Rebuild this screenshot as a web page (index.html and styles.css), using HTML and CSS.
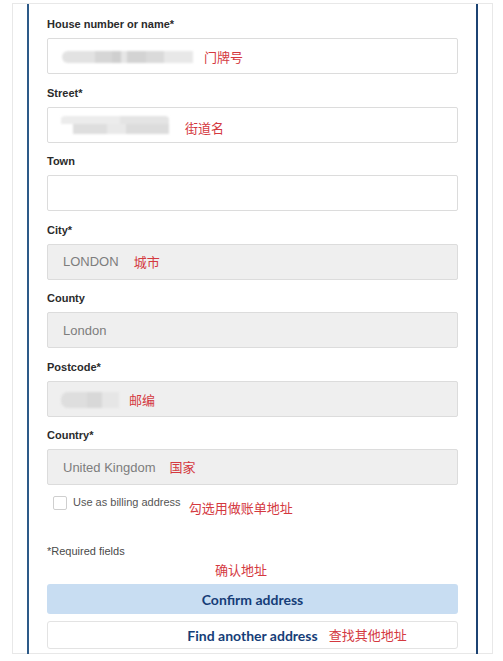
FILE: index.html
```html
<!DOCTYPE html>
<html lang="en">
<head>
<meta charset="utf-8">
<title>Address</title>
<link rel="stylesheet" href="styles.css">
</head>
<body>
<div class="frame">
  <div class="panel">
    <div class="field">
      <div class="label">House number or name*</div>
      <div class="input">
        <span class="blur blur-house"></span>
        <span class="note note-house">门牌号</span>
      </div>
    </div>
    <div class="field">
      <div class="label">Street*</div>
      <div class="input">
        <span class="blur blur-street"><span class="b1"></span><span class="b2"></span></span>
        <span class="note note-street">街道名</span>
      </div>
    </div>
    <div class="field">
      <div class="label">Town</div>
      <div class="input"></div>
    </div>
    <div class="field">
      <div class="label">City*</div>
      <div class="input disabled">
        <span class="value">LONDON</span>
        <span class="note note-city">城市</span>
      </div>
    </div>
    <div class="field">
      <div class="label">County</div>
      <div class="input disabled">
        <span class="value">London</span>
      </div>
    </div>
    <div class="field">
      <div class="label">Postcode*</div>
      <div class="input disabled">
        <span class="blur blur-post"></span>
        <span class="note note-post">邮编</span>
      </div>
    </div>
    <div class="field last">
      <div class="label">Country*</div>
      <div class="input disabled">
        <span class="value">United Kingdom</span>
        <span class="note note-country">国家</span>
      </div>
    </div>
    <div class="check-row">
      <span class="checkbox"></span>
      <span class="check-text">Use as billing address</span>
      <span class="note note-check">勾选用做账单地址</span>
    </div>
    <div class="required">*Required fields</div>
    <div class="note note-confirm">确认地址</div>
    <div class="btn btn-primary"><span class="btn-text">Confirm address</span></div>
    <div class="btn btn-secondary">
      <span></span>
      <span class="btn-text">Find another address</span>
      <span class="note note-find">查找其他地址</span>
    </div>
  </div>
</div>
</body>
</html>
```
FILE: styles.css
```css
* { box-sizing: border-box; }
html, body { margin: 0; padding: 0; background: #fff; }
body { font-family: "Liberation Sans", Arial, sans-serif; overflow: hidden; }

.frame {
  margin: 3px 0 0 12px;
  width: 481px;
  height: 651px;
  border: 1px solid #e8e8e8;
}

.panel {
  margin-left: 14px;
  width: 451px;
  height: 657px;
  border-left: 2px solid #2d5a88;
  border-right: 2px solid #1c4373;
  padding: 13px 18px 0 18px;
}

.field { margin-bottom: 11.5px; }
.field.last { margin-bottom: 0; }

.label {
  font-size: 11px;
  line-height: 14px;
  font-weight: bold;
  color: #2b2b2b;
  margin-bottom: 7px;
}

.input {
  height: 36px;
  border: 1px solid #dcdcdc;
  border-radius: 2px;
  background: #fff;
  display: flex;
  align-items: center;
  padding-left: 15px;
}
.input.disabled { background: #efefef; }

.value {
  font-size: 13px;
  color: #7d7d7d;
}

.note {
  font-family: "Noto Sans CJK SC", sans-serif;
  font-size: 13px;
  font-weight: normal;
  color: #d4393f;
  line-height: 16px;
}
.note-house { margin-left: 11px; margin-top: 2px; }
.note-street { margin-left: 16px; margin-top: 6px; }
.note-city { margin-left: 15px; }
.note-post { margin-left: 10px; margin-top: 2px; }
.note-country { margin-left: 14px; }

.blur { display: inline-block; filter: blur(1.2px); }
.blur-house {
  width: 131px;
  height: 12px;
  margin-top: 2px;
  margin-left: -1px;
  border-radius: 6px 0 0 6px;
  background: linear-gradient(90deg,
    #e2e2e2 0 25%, #d6d6d6 25% 38%, #cfcfcf 38% 45%, #e6e6e6 45% 50%,
    #d3d3d3 50% 64%, #dadada 64% 78%, #e8e8e8 78% 100%);
}
.blur-street {
  display: flex;
  flex-direction: column;
  width: 108px;
  margin-left: -2px;
  margin-top: 1px;
}
.blur-street .b1 {
  height: 8px;
  width: 108px;
  border-radius: 4px 4px 0 0;
  background: linear-gradient(90deg, #ececec 0 55%, #e4e4e4 55% 100%);
}
.blur-street .b2 {
  height: 10px;
  width: 96px;
  margin-left: 12px;
  background: linear-gradient(90deg, #dedede 0 35%, #e9e9e9 35% 55%, #dcdcdc 55% 100%);
}
.blur-post {
  width: 58px;
  height: 16px;
  margin-left: -2px;
  margin-top: 2px;
  border-radius: 7px 0 0 7px;
  background: linear-gradient(90deg, #dedede 0 45%, #d8d8d8 45% 70%, #e6e6e6 70% 100%);
}

.check-row {
  display: flex;
  align-items: flex-start;
  margin-top: 11px;
  padding-left: 6px;
  height: 25px;
}
.checkbox {
  width: 14px;
  height: 14px;
  border: 1px solid #cfcfcf;
  border-radius: 2px;
  background: #fff;
}
.check-text {
  margin-left: 6px;
  font-size: 11px;
  line-height: 12px;
  color: #555;
}
.note-check { margin-left: 8px; margin-top: 4px; }

.required {
  margin-top: 23px;
  font-size: 11px;
  line-height: 14px;
  color: #4a4a4a;
}
.note-confirm {
  margin-top: 4px;
  margin-left: 168px;
}

.btn {
  border-radius: 3px;
  font-family: Lato, "Open Sans", sans-serif;
  font-weight: bold;
  font-size: 14px;
  color: #163d78;
}
.btn-primary {
  margin-top: 6px;
  height: 30px;
  background: #c8ddf2;
  display: flex;
  align-items: center;
  justify-content: center;
}
.btn-secondary {
  margin-top: 7px;
  height: 28px;
  border: 1px solid #e3e3e3;
  background: #fff;
  display: grid;
  grid-template-columns: 1fr auto 1fr;
  align-items: center;
}
.note-find { margin-left: 11px; }
```
